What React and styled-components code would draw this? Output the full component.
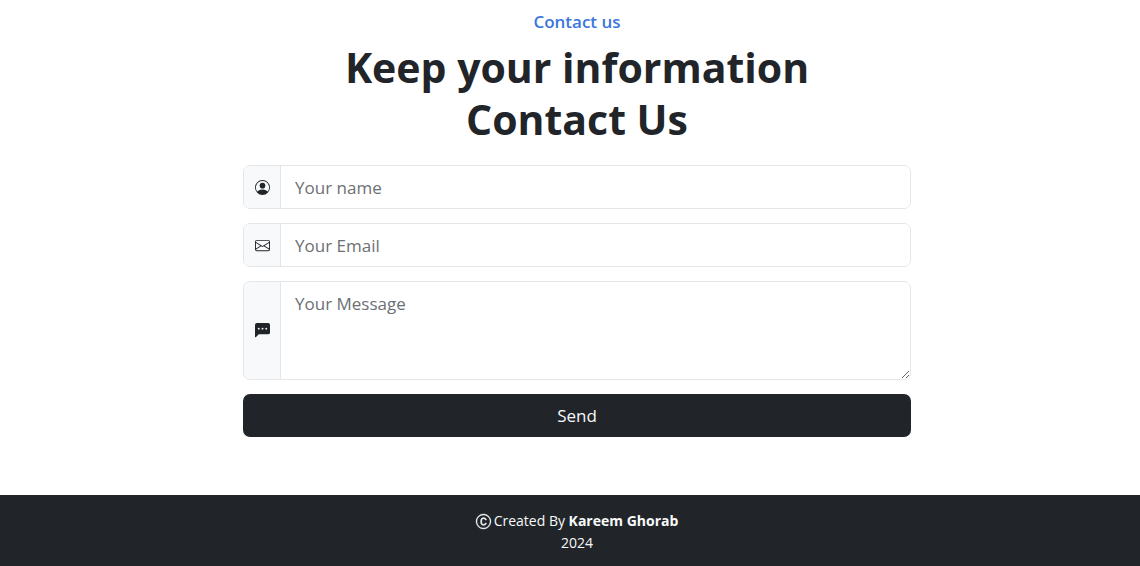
import React from "react";
import styled, { createGlobalStyle } from "styled-components";
import { BsPersonCircle, BsEnvelope, BsChatLeftDotsFill, BsCCircle } from "react-icons/bs";

const GlobalStyle = createGlobalStyle`
  *, *::before, *::after { box-sizing: border-box; }
  body {
    margin: 0;
    background: #fff;
    color: #212529;
    font-family: "Segoe UI", "Open Sans", "Noto Sans", sans-serif;
    font-size: 17px;
    line-height: 28px;
  }
`;

const Contact = styled.main`
  padding: 8px 0 58px 14px;
`;

const Header = styled.header`
  text-align: center;
`;

const Eyebrow = styled.p`
  margin: 0;
  color: #3b76dc;
  font-weight: 600;
`;

const Title = styled.h1`
  margin: 5px auto 20px;
  max-width: 560px;
  font-size: 41px;
  line-height: 52px;
  font-weight: 700;
`;

const Form = styled.form`
  display: flex;
  flex-direction: column;
  gap: 14px;
  max-width: 668px;
  margin: 0 auto;
`;

const Group = styled.div`
  display: flex;
  border: 1px solid #e3e7ea;
  border-radius: 7px;
  overflow: hidden;

  &:focus-within { border-color: #86b7fe; }
`;

const Addon = styled.label`
  display: flex;
  align-items: center;
  justify-content: center;
  flex: 0 0 37px;
  background: #f8f9fb;
  border-right: 1px solid #e3e7ea;
  font-size: 15px;
`;

const Input = styled.input`
  flex: 1;
  min-width: 0;
  height: 42px;
  padding: 0 14px;
  border: 0;
  outline: 0;
  background: #fff;
  color: inherit;
  font: inherit;

  &::placeholder { color: #6c7074; opacity: 1; }
`;

const Message = styled(Input)`
  height: 97px;
  padding: 8px 14px;
  resize: vertical;
`;

const Send = styled.button`
  height: 43px;
  border: 0;
  border-radius: 7px;
  background: #212529;
  color: #f8f9fa;
  font: inherit;
  cursor: pointer;
`;

const Footer = styled.footer`
  padding: 15px 0 12px 14px;
  background: #212529;
  color: #f8f9fa;
  font-size: 14px;
  line-height: 22px;
  text-align: center;
`;

const Credit = styled.p`
  display: flex;
  align-items: center;
  justify-content: center;
  gap: 3px;
  margin: 0;
`;

const CopyrightIcon = styled(BsCCircle)`
  stroke: currentColor;
  stroke-width: 0.4;
  overflow: visible;
`;

const Year = styled.p`
  margin: 0;
`;

const fields = [
  { id: "name", label: "Your name", type: "text", Icon: BsPersonCircle },
  { id: "email", label: "Your Email", type: "email", Icon: BsEnvelope },
];

export default function App() {
  return (
    <>
      <GlobalStyle />
      <Contact>
        <Header>
          <Eyebrow>Contact us</Eyebrow>
          <Title>Keep your information Contact Us</Title>
        </Header>
        <Form onSubmit={(e) => e.preventDefault()}>
          {fields.map(({ id, label, type, Icon }) => (
            <Group key={id}>
              <Addon htmlFor={id} aria-label={label}><Icon /></Addon>
              <Input id={id} type={type} placeholder={label} />
            </Group>
          ))}
          <Group>
            <Addon htmlFor="message" aria-label="Your Message"><BsChatLeftDotsFill /></Addon>
            <Message as="textarea" id="message" placeholder="Your Message" />
          </Group>
          <Send type="submit">Send</Send>
        </Form>
      </Contact>
      <Footer>
        <Credit>
          <CopyrightIcon size={15} />
          <span>Created By <strong>Kareem Ghorab</strong></span>
        </Credit>
        <Year>2024</Year>
      </Footer>
    </>
  );
}
